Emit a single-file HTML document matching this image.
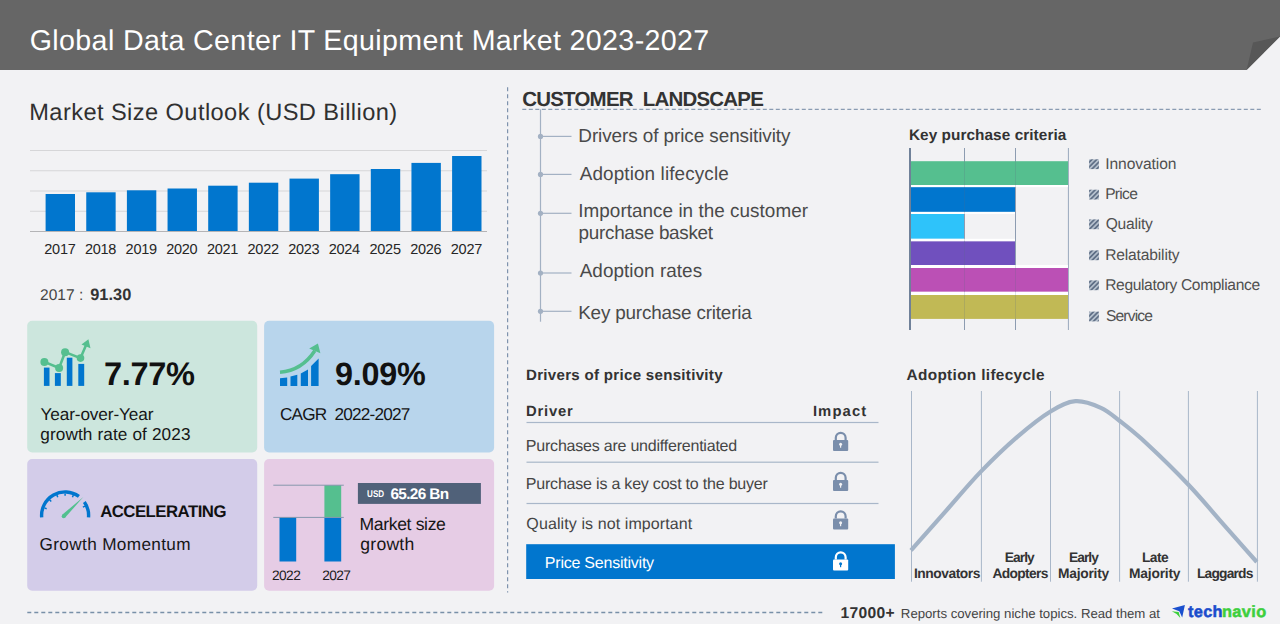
<!DOCTYPE html>
<html><head><meta charset="utf-8"><style>
html,body{margin:0;padding:0}
body{width:1280px;height:624px;overflow:hidden;background:#f2f2f4;position:relative;font-family:"Liberation Sans",sans-serif}
.abs{position:absolute}
.t{position:absolute;white-space:nowrap;line-height:1;text-rendering:geometricPrecision}
</style></head><body>
<svg class="abs" style="left:0;top:0" width="1280" height="624" viewBox="0 0 1280 624">
<polygon points="0,0 1280,0 1280,36.5 1246.6,70 0,70" fill="#666666"/>
<polygon points="1253,42.5 1280,36.5 1246.6,70" fill="#575757"/>
<rect x="30" y="150.0" width="457" height="1" fill="#d6d6d8"/>
<rect x="30" y="170.25" width="457" height="1" fill="#d6d6d8"/>
<rect x="30" y="190.5" width="457" height="1" fill="#d6d6d8"/>
<rect x="30" y="210.75" width="457" height="1" fill="#d6d6d8"/>
<rect x="30" y="231" width="457" height="1" fill="#b4b4b6"/>
<rect x="45.60" y="194" width="29.4" height="37.00" fill="#0176ce"/>
<rect x="86.25" y="192.3" width="29.4" height="38.70" fill="#0176ce"/>
<rect x="126.90" y="190.3" width="29.4" height="40.70" fill="#0176ce"/>
<rect x="167.55" y="188.5" width="29.4" height="42.50" fill="#0176ce"/>
<rect x="208.20" y="185.7" width="29.4" height="45.30" fill="#0176ce"/>
<rect x="248.85" y="182.7" width="29.4" height="48.30" fill="#0176ce"/>
<rect x="289.50" y="178.6" width="29.4" height="52.40" fill="#0176ce"/>
<rect x="330.15" y="174.2" width="29.4" height="56.80" fill="#0176ce"/>
<rect x="370.80" y="169" width="29.4" height="62.00" fill="#0176ce"/>
<rect x="411.45" y="162.9" width="29.4" height="68.10" fill="#0176ce"/>
<rect x="452.10" y="156" width="29.4" height="75.00" fill="#0176ce"/>
<rect x="27.2" y="320.8" width="230" height="131.6" rx="5" fill="#cce6dd"/>
<rect x="264.1" y="320.8" width="230" height="131.6" rx="5" fill="#b8d5ec"/>
<rect x="27.2" y="459.1" width="230" height="131.6" rx="5" fill="#d3cce9"/>
<rect x="264.1" y="459.1" width="230" height="131.6" rx="5" fill="#e6cce5"/>
<g fill="#0176ce">
<rect x="43.9" y="367.6" width="5.6" height="18.3"/>
<rect x="54.9" y="373.1" width="5.9" height="12.8"/>
<rect x="66.8" y="357.7" width="5.6" height="28.2"/>
<rect x="78.3" y="363.9" width="5.9" height="22"/>
</g>
<g fill="#55bf8f">
<polyline points="44.4,361.9 59.1,368 65.1,352.2 80.5,358.1 86.2,344.7" fill="none" stroke="#55bf8f" stroke-width="2.5"/>
<circle cx="44.4" cy="361.9" r="4"/>
<circle cx="59.1" cy="368" r="4"/>
<circle cx="65.1" cy="352.2" r="4"/>
<circle cx="80.5" cy="358.1" r="3.8"/>
<polygon points="88.4,339.2 81.5,344.5 90.5,348.3"/>
</g>
<g fill="#0176ce">
<polygon points="280,385.9 280,378.2 287.2,377.6 287.2,385.9"/>
<polygon points="290.5,385.9 290.5,376.5 297.3,374.8 297.3,385.9"/>
<polygon points="300.8,385.9 300.8,373.4 308,369.5 308,385.9"/>
<polygon points="311.1,385.9 311.1,365.9 318.6,358.4 318.6,385.9"/>
</g>
<path d="M280,372.3 Q302,370.5 314.8,350.8" fill="none" stroke="#55bf8f" stroke-width="3.5"/>
<polygon points="317.9,343.4 309.2,348.6 320.4,353.2" fill="#55bf8f"/>
<path d="M41.69,517.45 A23.5,23.5 0 0 1 78.91,496.39" fill="none" stroke="#0176ce" stroke-width="3.4"/>
<path d="M84.35,501.92 A23.5,23.5 0 0 1 88.51,517.45" fill="none" stroke="#0176ce" stroke-width="3.4"/>
<line x1="44.43" y1="507.88" x2="46.68" y2="508.70" stroke="#0176ce" stroke-width="1.5"/>
<line x1="49.54" y1="499.84" x2="51.24" y2="501.54" stroke="#0176ce" stroke-width="1.5"/>
<line x1="56.86" y1="495.00" x2="57.76" y2="497.23" stroke="#0176ce" stroke-width="1.5"/>
<line x1="65.10" y1="493.40" x2="65.10" y2="495.80" stroke="#0176ce" stroke-width="1.5"/>
<line x1="73.34" y1="495.00" x2="72.44" y2="497.23" stroke="#0176ce" stroke-width="1.5"/>
<line x1="85.04" y1="506.10" x2="82.86" y2="507.12" stroke="#0176ce" stroke-width="1.5"/>
<path d="M62.2,514.8 L83.3,496.9 L65.2,517.6 Z" fill="#52c08f"/>
<circle cx="63.7" cy="516.2" r="2" fill="#52c08f"/>
<rect x="279.5" y="517.4" width="16.7" height="44.1" fill="#0176ce"/>
<rect x="324.4" y="517.4" width="16.8" height="44.1" fill="#0176ce"/>
<rect x="324.4" y="485.2" width="16.8" height="32.2" fill="#55bf8f"/>
<rect x="273.3" y="484.7" width="70.5" height="1" fill="#8797ad"/>
<rect x="273.3" y="516.9" width="70.5" height="1" fill="#8797ad"/>
<rect x="357.9" y="483" width="123" height="20.9" fill="#506179"/>
<line x1="507.6" y1="87.3" x2="507.6" y2="592.5" stroke="#7f93ad" stroke-width="1.2" stroke-dasharray="4 3"/>
<line x1="522.3" y1="109.4" x2="1262" y2="109.4" stroke="#8a9cb2" stroke-width="1.2" stroke-dasharray="4 2.5"/>
<line x1="540.5" y1="109.4" x2="540.5" y2="321.7" stroke="#a3b1c3" stroke-width="1.2"/>
<circle cx="540.5" cy="136.4" r="2.6" fill="#a3b1c3"/><rect x="540.5" y="135.8" width="31" height="1.2" fill="#a3b1c3"/>
<circle cx="540.5" cy="174.4" r="2.6" fill="#a3b1c3"/><rect x="540.5" y="173.8" width="31" height="1.2" fill="#a3b1c3"/>
<circle cx="540.5" cy="213.3" r="2.6" fill="#a3b1c3"/><rect x="540.5" y="212.70000000000002" width="31" height="1.2" fill="#a3b1c3"/>
<circle cx="540.5" cy="273" r="2.6" fill="#a3b1c3"/><rect x="540.5" y="272.4" width="31" height="1.2" fill="#a3b1c3"/>
<circle cx="540.5" cy="311.3" r="2.6" fill="#a3b1c3"/><rect x="540.5" y="310.7" width="31" height="1.2" fill="#a3b1c3"/>
<line x1="27.3" y1="612.5" x2="823" y2="612.5" stroke="#7890a8" stroke-width="1.3" stroke-dasharray="4 3"/>
<rect x="964.0" y="148" width="1" height="182" fill="#9aa9bd"/>
<rect x="1015.0" y="148" width="1" height="182" fill="#9aa9bd"/>
<rect x="1067.9" y="148" width="1" height="182" fill="#9aa9bd"/>
<rect x="910.9" y="161.2" width="157.10" height="23.80" fill="#55bf8f"/>
<rect x="910.9" y="187.1" width="104.10" height="24.80" fill="#0176ce"/>
<rect x="910.9" y="214" width="53.10" height="24.80" fill="#2ec3fa"/>
<rect x="910.9" y="241.2" width="104.10" height="23.80" fill="#7050be"/>
<rect x="910.9" y="268" width="157.10" height="23.80" fill="#bb50b5"/>
<rect x="910.9" y="295" width="157.10" height="23.90" fill="#c1b955"/>
<rect x="910.9" y="185.00" width="157.10" height="2.10" fill="#ffffff"/>
<rect x="910.9" y="211.90" width="104.10" height="2.10" fill="#ffffff"/>
<rect x="910.9" y="238.80" width="104.10" height="2.40" fill="#ffffff"/>
<rect x="910.9" y="265.00" width="157.10" height="3.00" fill="#ffffff"/>
<rect x="910.9" y="291.80" width="157.10" height="3.20" fill="#ffffff"/>
<rect x="964.0" y="148" width="1" height="182" fill="#5a6a80" fill-opacity="0.2"/>
<rect x="1015.0" y="148" width="1" height="182" fill="#5a6a80" fill-opacity="0.2"/>
<rect x="909.1" y="148" width="1.8" height="182" fill="#62758f"/>
<defs><pattern id="hp" width="3.4" height="3.4" patternUnits="userSpaceOnUse" patternTransform="rotate(45)"><rect width="3.4" height="3.4" fill="#b4bfcc"/><rect width="1.7" height="3.4" fill="#5f6f86"/></pattern></defs>
<rect x="1089.1" y="159.3" width="9.8" height="9.8" fill="url(#hp)"/>
<rect x="1089.1" y="189.7" width="9.8" height="9.8" fill="url(#hp)"/>
<rect x="1089.1" y="219.4" width="9.8" height="9.8" fill="url(#hp)"/>
<rect x="1089.1" y="250.4" width="9.8" height="9.8" fill="url(#hp)"/>
<rect x="1089.1" y="280.4" width="9.8" height="9.8" fill="url(#hp)"/>
<rect x="1089.1" y="311.6" width="9.8" height="9.8" fill="url(#hp)"/>
<rect x="526.5" y="421.9" width="352" height="1.2" fill="#a9b7c9"/>
<rect x="526.5" y="461.59999999999997" width="352" height="1.2" fill="#a9b7c9"/>
<rect x="526.5" y="502.9" width="352" height="1.2" fill="#a9b7c9"/>
<rect x="526.2" y="544.2" width="368.7" height="34.8" fill="#0176ce"/>
<path d="M835.8,440 v-2.2 a4.9,4.9 0 0 1 9.8,0 v2.2" fill="none" stroke="#7a8eab" stroke-width="2.2"/><rect x="833" y="440" width="15.2" height="11" rx="1" fill="#7a8eab"/><circle cx="840.6" cy="444.3" r="1.5" fill="#f2f2f4"/><rect x="840" y="444.5" width="1.2" height="3.2" fill="#f2f2f4"/>
<path d="M835.8,480 v-2.2 a4.9,4.9 0 0 1 9.8,0 v2.2" fill="none" stroke="#7a8eab" stroke-width="2.2"/><rect x="833" y="480" width="15.2" height="11" rx="1" fill="#7a8eab"/><circle cx="840.6" cy="484.3" r="1.5" fill="#f2f2f4"/><rect x="840" y="484.5" width="1.2" height="3.2" fill="#f2f2f4"/>
<path d="M835.8,518.5 v-2.2 a4.9,4.9 0 0 1 9.8,0 v2.2" fill="none" stroke="#7a8eab" stroke-width="2.2"/><rect x="833" y="518.5" width="15.2" height="11" rx="1" fill="#7a8eab"/><circle cx="840.6" cy="522.8" r="1.5" fill="#f2f2f4"/><rect x="840" y="523.0" width="1.2" height="3.2" fill="#f2f2f4"/>
<path d="M835.8,559.5 v-2.2 a4.9,4.9 0 0 1 9.8,0 v2.2" fill="none" stroke="#ffffff" stroke-width="2.2"/><rect x="833" y="559.5" width="15.2" height="11" rx="1" fill="#ffffff"/><circle cx="840.6" cy="563.8" r="1.5" fill="#0176ce"/><rect x="840" y="564.0" width="1.2" height="3.2" fill="#0176ce"/>
<rect x="911.0" y="391" width="1" height="190.7" fill="#a9b7c9"/>
<rect x="980.9" y="391" width="1" height="190.7" fill="#a9b7c9"/>
<rect x="1050.0" y="391" width="1" height="190.7" fill="#a9b7c9"/>
<rect x="1119.1" y="391" width="1" height="190.7" fill="#a9b7c9"/>
<rect x="1187.9" y="391" width="1" height="190.7" fill="#a9b7c9"/>
<rect x="1256.9" y="391" width="1" height="190.7" fill="#a9b7c9"/>
<path d="M911,550.4 C922.7,537.2 934.3,524.1 946,510.9 C957.7,497.7 969.2,483.7 981.1,471.4 C993.0,459.1 1005.7,446.9 1017.3,436.9 C1028.9,426.9 1040.8,417.4 1050.5,411.5 C1060.2,405.6 1067.1,401.8 1075.5,401.2 C1083.9,400.6 1093.5,404.5 1100.9,407.8 C1108.3,411.1 1112.2,415.1 1119.8,421 C1127.4,426.9 1135.1,432.8 1146.6,443.5 C1158.1,454.2 1176.0,471.6 1188.7,485 C1201.4,498.4 1211.7,511.0 1223,523.8 C1234.3,536.6 1245.5,549.3 1256.8,562" fill="none" stroke="#a3b3c6" stroke-width="4.2"/>
<polygon points="1172,608.6 1184.9,604.9 1182.2,617.6 1179.3,611.3" fill="#1a4fce"/>
<polygon points="1171.8,611.2 1178.7,611.9 1180.3,617.9 1176.6,613.9" fill="#3ccf3c"/>
</svg>
<div class="t" style="left:29.76px;top:26.90px;font-size:28.59px;font-weight:400;color:#ffffff;letter-spacing:0.374px;">Global Data Center IT Equipment Market 2023-2027</div>
<div class="t" style="left:29.26px;top:101.82px;font-size:23.61px;font-weight:400;color:#303030;letter-spacing:0.426px;">Market Size Outlook (USD Billion)</div>
<div class="t" style="left:44.32px;top:242.72px;font-size:14.51px;font-weight:400;color:#262626;letter-spacing:-0.268px;">2017</div>
<div class="t" style="left:84.97px;top:242.72px;font-size:14.51px;font-weight:400;color:#262626;letter-spacing:-0.268px;">2018</div>
<div class="t" style="left:125.62px;top:242.72px;font-size:14.51px;font-weight:400;color:#262626;letter-spacing:-0.268px;">2019</div>
<div class="t" style="left:166.27px;top:242.72px;font-size:14.51px;font-weight:400;color:#262626;letter-spacing:-0.343px;">2020</div>
<div class="t" style="left:206.92px;top:242.72px;font-size:14.51px;font-weight:400;color:#262626;letter-spacing:-0.268px;">2021</div>
<div class="t" style="left:247.57px;top:242.72px;font-size:14.51px;font-weight:400;color:#262626;letter-spacing:-0.268px;">2022</div>
<div class="t" style="left:288.22px;top:242.72px;font-size:14.51px;font-weight:400;color:#262626;letter-spacing:-0.268px;">2023</div>
<div class="t" style="left:328.87px;top:242.72px;font-size:14.51px;font-weight:400;color:#262626;letter-spacing:-0.343px;">2024</div>
<div class="t" style="left:369.52px;top:242.72px;font-size:14.51px;font-weight:400;color:#262626;letter-spacing:-0.268px;">2025</div>
<div class="t" style="left:410.17px;top:242.72px;font-size:14.51px;font-weight:400;color:#262626;letter-spacing:-0.268px;">2026</div>
<div class="t" style="left:450.82px;top:242.72px;font-size:14.51px;font-weight:400;color:#262626;letter-spacing:-0.268px;">2027</div>
<div class="t" style="left:39.97px;top:287.68px;font-size:15.50px;font-weight:400;color:#454545;letter-spacing:0.065px;">2017 :</div>
<div class="t" style="left:90.19px;top:286.96px;font-size:16.36px;font-weight:700;color:#333333;letter-spacing:0.061px;">91.30</div>
<div class="t" style="left:104.08px;top:358.23px;font-size:32.57px;font-weight:700;color:#111111;letter-spacing:-0.392px;">7.77%</div>
<div class="t" style="left:40.48px;top:406.23px;font-size:17.21px;font-weight:400;color:#161616;letter-spacing:-0.106px;">Year-over-Year</div>
<div class="t" style="left:40.21px;top:426.23px;font-size:17.21px;font-weight:400;color:#161616;letter-spacing:0.122px;">growth rate of 2023</div>
<div class="t" style="left:334.99px;top:357.61px;font-size:32.36px;font-weight:700;color:#111111;letter-spacing:-0.218px;">9.09%</div>
<div class="t" style="left:279.94px;top:406.33px;font-size:17.21px;font-weight:400;color:#161616;letter-spacing:-0.791px;">CAGR  2022-2027</div>
<div class="t" style="left:100.14px;top:503.60px;font-size:16.78px;font-weight:700;color:#111111;letter-spacing:-0.511px;">ACCELERATING</div>
<div class="t" style="left:39.59px;top:536.33px;font-size:17.21px;font-weight:400;color:#161616;letter-spacing:0.349px;">Growth Momentum</div>
<div class="t" style="left:271.96px;top:569.13px;font-size:13.72px;font-weight:400;color:#1a1a1a;letter-spacing:-0.544px;">2022</div>
<div class="t" style="left:322.16px;top:569.13px;font-size:13.72px;font-weight:400;color:#1a1a1a;letter-spacing:-0.577px;">2027</div>
<div class="t" style="left:366.95px;top:489.61px;font-size:9.67px;font-weight:700;color:#ffffff;letter-spacing:0.000px;;transform:scaleX(0.8354);transform-origin:0.45px 0">USD</div>
<div class="t" style="left:390.42px;top:487.00px;font-size:15.36px;font-weight:700;color:#ffffff;letter-spacing:-0.651px;">65.26 Bn</div>
<div class="t" style="left:359.52px;top:516.00px;font-size:17.60px;font-weight:400;color:#161616;letter-spacing:-0.359px;">Market size</div>
<div class="t" style="left:360.35px;top:535.60px;font-size:17.60px;font-weight:400;color:#161616;letter-spacing:0.203px;">growth</div>
<div class="t" style="left:522.16px;top:90.27px;font-size:20.48px;font-weight:700;color:#333333;letter-spacing:-0.764px;">CUSTOMER  LANDSCAPE</div>
<div class="t" style="left:578.32px;top:127.80px;font-size:18.90px;font-weight:400;color:#4a4a4a;letter-spacing:-0.073px;">Drivers of price sensitivity</div>
<div class="t" style="left:579.75px;top:166.00px;font-size:18.90px;font-weight:400;color:#4a4a4a;letter-spacing:0.114px;">Adoption lifecycle</div>
<div class="t" style="left:578.27px;top:202.90px;font-size:18.90px;font-weight:400;color:#4a4a4a;letter-spacing:0.033px;">Importance in the customer</div>
<div class="t" style="left:578.57px;top:225.20px;font-size:18.90px;font-weight:400;color:#4a4a4a;letter-spacing:-0.294px;">purchase basket</div>
<div class="t" style="left:579.70px;top:262.90px;font-size:18.90px;font-weight:400;color:#4a4a4a;letter-spacing:0.047px;">Adoption rates</div>
<div class="t" style="left:578.22px;top:304.75px;font-size:18.90px;font-weight:400;color:#4a4a4a;letter-spacing:-0.194px;">Key purchase criteria</div>
<div class="t" style="left:908.89px;top:127.80px;font-size:15.36px;font-weight:700;color:#333333;letter-spacing:0.059px;">Key purchase criteria</div>
<div class="t" style="left:1105.18px;top:156.90px;font-size:15.60px;font-weight:400;color:#505050;letter-spacing:-0.066px;">Innovation</div>
<div class="t" style="left:1105.18px;top:187.10px;font-size:15.60px;font-weight:400;color:#505050;letter-spacing:-0.723px;">Price</div>
<div class="t" style="left:1105.67px;top:216.90px;font-size:15.60px;font-weight:400;color:#505050;letter-spacing:-0.220px;">Quality</div>
<div class="t" style="left:1105.18px;top:247.80px;font-size:15.60px;font-weight:400;color:#505050;letter-spacing:-0.162px;">Relatability</div>
<div class="t" style="left:1105.18px;top:277.80px;font-size:15.60px;font-weight:400;color:#505050;letter-spacing:-0.360px;">Regulatory Compliance</div>
<div class="t" style="left:1105.91px;top:309.20px;font-size:15.60px;font-weight:400;color:#505050;letter-spacing:-0.816px;">Service</div>
<div class="t" style="left:525.96px;top:368.24px;font-size:15.08px;font-weight:700;color:#333333;letter-spacing:0.297px;">Drivers of price sensitivity</div>
<div class="t" style="left:525.98px;top:405.27px;font-size:14.80px;font-weight:700;color:#333333;letter-spacing:0.791px;">Driver</div>
<div class="t" style="left:812.88px;top:405.27px;font-size:14.80px;font-weight:700;color:#333333;letter-spacing:1.119px;">Impact</div>
<div class="t" style="left:525.85px;top:439.36px;font-size:16.00px;font-weight:400;color:#454545;letter-spacing:-0.216px;">Purchases are undifferentiated</div>
<div class="t" style="left:525.85px;top:477.36px;font-size:16.00px;font-weight:400;color:#454545;letter-spacing:-0.206px;">Purchase is a key cost to the buyer</div>
<div class="t" style="left:526.35px;top:516.56px;font-size:16.00px;font-weight:400;color:#454545;letter-spacing:0.099px;">Quality is not important</div>
<div class="t" style="left:544.85px;top:556.36px;font-size:16.00px;font-weight:400;color:#ffffff;letter-spacing:-0.229px;">Price Sensitivity</div>
<div class="t" style="left:906.56px;top:367.80px;font-size:15.36px;font-weight:700;color:#333333;letter-spacing:0.332px;">Adoption lifecycle</div>
<div class="t" style="left:913.94px;top:566.82px;font-size:13.80px;font-weight:700;color:#333333;letter-spacing:-0.447px;">Innovators</div>
<div class="t" style="left:1004.84px;top:550.52px;font-size:13.80px;font-weight:700;color:#333333;letter-spacing:-0.946px;">Early</div>
<div class="t" style="left:992.48px;top:566.82px;font-size:13.80px;font-weight:700;color:#333333;letter-spacing:-0.657px;">Adopters</div>
<div class="t" style="left:1068.94px;top:550.52px;font-size:13.80px;font-weight:700;color:#333333;letter-spacing:-0.946px;">Early</div>
<div class="t" style="left:1058.04px;top:567.02px;font-size:13.80px;font-weight:700;color:#333333;letter-spacing:-0.248px;">Majority</div>
<div class="t" style="left:1141.94px;top:550.52px;font-size:13.80px;font-weight:700;color:#333333;letter-spacing:-0.556px;">Late</div>
<div class="t" style="left:1129.04px;top:567.02px;font-size:13.80px;font-weight:700;color:#333333;letter-spacing:-0.205px;">Majority</div>
<div class="t" style="left:1196.94px;top:567.02px;font-size:13.80px;font-weight:700;color:#333333;letter-spacing:-0.813px;">Laggards</div>
<div class="t" style="left:840.52px;top:605.56px;font-size:15.64px;font-weight:700;color:#333333;letter-spacing:0.324px;">17000+</div>
<div class="t" style="left:900.87px;top:606.60px;font-size:13.23px;font-weight:400;color:#444444;letter-spacing:-0.023px;">Reports covering niche topics. Read them at</div>
<div class="t" style="left:1187.90px;top:604.47px;font-size:16.34px;font-weight:700;color:#1a4ccc;letter-spacing:0.364px;-webkit-text-stroke:0.5px #1a4ccc">tech</div>
<div class="t" style="left:1221.98px;top:604.47px;font-size:16.34px;font-weight:700;color:#3dcf3d;letter-spacing:0.394px;-webkit-text-stroke:0.5px #3dcf3d">navio</div>
</body></html>
